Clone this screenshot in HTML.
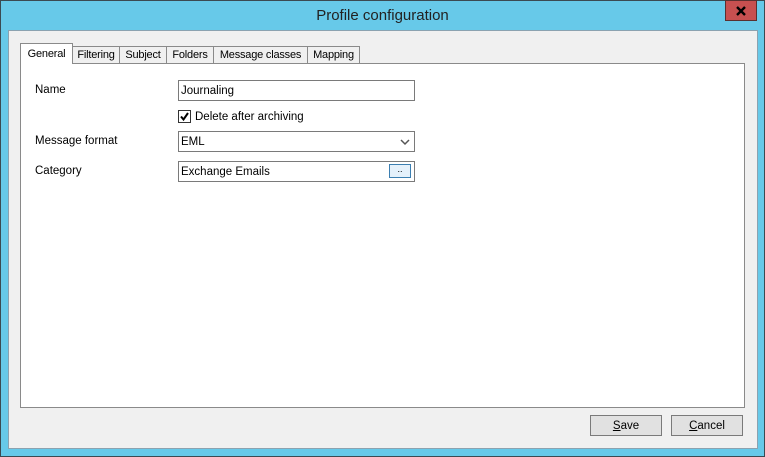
<html><head><style>
body{margin:0;width:765px;height:457px;background:#67c9e9;font-family:"Liberation Sans",sans-serif;font-size:11.5px;position:relative;overflow:hidden;color:#000}
.a{position:absolute}
.frame{left:0;top:0;width:763px;height:455px;border:1px solid #3b4a52}
.client{left:8px;top:30px;width:748px;height:417px;background:#f0f0f0;border:1px solid #8ba2b0}
.tab{top:46px;height:16px;border:1px solid #8a8a8a;border-bottom:none;background:#f0f0f0;font-size:11px;text-align:center;line-height:17px;letter-spacing:-0.2px}
.page{left:20px;top:63px;width:723px;height:343px;background:#fff;border:1px solid #8a8a8a}
.tb{left:178px;width:235px;height:19px;border:1px solid #7a7a7a;background:#fff;line-height:20px;text-indent:2px}
.lbl{left:35px}
.btn{top:415px;width:70px;height:19px;border:1px solid #7a7a7a;background:#e1e1e1;text-align:center;line-height:20px}
</style></head><body>
<div class="a frame"></div>
<div class="a" style="left:0;top:7px;width:765px;text-align:center;font-size:15px;color:#222">Profile configuration</div>
<div class="a" style="left:725px;top:0;width:32px;height:21px;background:#c75050;border:1px solid #5a3030;box-sizing:border-box"><svg width="30" height="19" style="position:absolute;left:0;top:0"><path d="M11 6 L19 14 M19 6 L11 14" stroke="#000" stroke-width="2.4"/></svg></div>
<div class="a client"></div>
<div class="a page"></div>
<div class="a tab" style="left:20px;top:43px;width:51px;height:20px;background:#fff;line-height:20px;z-index:2">General</div>
<div class="a tab" style="left:72px;width:46px">Filtering</div>
<div class="a tab" style="left:119px;width:46px">Subject</div>
<div class="a tab" style="left:166px;width:46px">Folders</div>
<div class="a tab" style="left:213px;width:93px">Message classes</div>
<div class="a tab" style="left:307px;width:51px">Mapping</div>
<div class="a lbl" style="top:84px">Name</div>
<div class="a tb" style="top:80px">Journaling</div>
<div class="a" style="left:178px;top:110px;width:11px;height:11px;border:1px solid #333;background:#fff"><svg width="11" height="11" style="position:absolute;left:0;top:0"><path d="M2 5.5 L4.5 8.5 L9 2" stroke="#000" stroke-width="2" fill="none"/></svg></div>
<div class="a" style="left:195px;top:111px">Delete after archiving</div>
<div class="a lbl" style="top:135px">Message format</div>
<div class="a tb" style="top:131px">EML<svg width="10" height="8" style="position:absolute;right:4px;top:6px"><path d="M1 2 L5 6 L9 2" stroke="#555" stroke-width="1.5" fill="none"/></svg></div>
<div class="a lbl" style="top:165px">Category</div>
<div class="a tb" style="top:161px">Exchange Emails</div>
<div class="a" style="left:389px;top:164px;width:20px;height:12px;border:1px solid #3c7fb1;background:#e5f1fb;font-size:9px;line-height:9px;text-align:center">..</div>
<div class="a btn" style="left:590px"><u>S</u>ave</div>
<div class="a btn" style="left:671px"><u>C</u>ancel</div>
</body></html>
